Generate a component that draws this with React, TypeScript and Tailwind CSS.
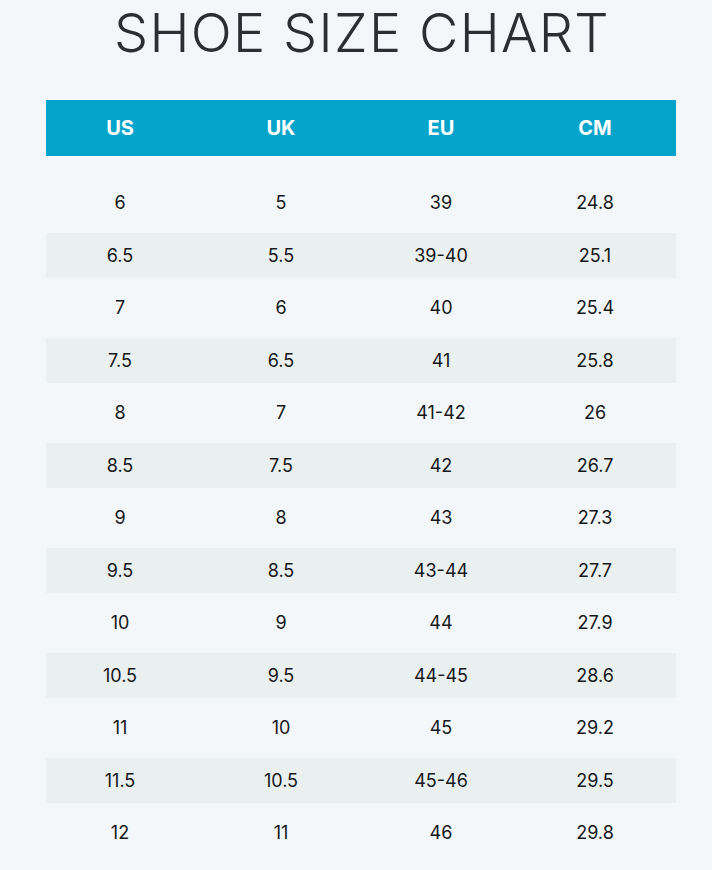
import React from "react";

const rows = [
  ["6", "5", "39", "24.8"],
  ["6.5", "5.5", "39-40", "25.1"],
  ["7", "6", "40", "25.4"],
  ["7.5", "6.5", "41", "25.8"],
  ["8", "7", "41-42", "26"],
  ["8.5", "7.5", "42", "26.7"],
  ["9", "8", "43", "27.3"],
  ["9.5", "8.5", "43-44", "27.7"],
  ["10", "9", "44", "27.9"],
  ["10.5", "9.5", "44-45", "28.6"],
  ["11", "10", "45", "29.2"],
  ["11.5", "10.5", "45-46", "29.5"],
  ["12", "11", "46", "29.8"],
];

const cols = "grid grid-cols-[148px_174px_146px_162px]";

const App = () => {
  return (
    <div className="min-h-[870px] w-full bg-[#f3f7f9] font-['Inter',sans-serif]">
      <div className="flex h-[66px] items-center justify-center pl-[12px]">
        <h1 className="text-[54px] font-light leading-none tracking-[0.025em] text-[#2b2e33]">
          SHOE SIZE CHART
        </h1>
      </div>

      <div className="mx-[46px] mt-[34px] w-[630px]">
        <div className={`${cols} h-[56px] items-center bg-[#05a5cb] text-[20px] font-bold text-white`}>
          <div className="text-center">US</div>
          <div className="text-center">UK</div>
          <div className="text-center">EU</div>
          <div className="text-center">CM</div>
        </div>

        <div className="flex flex-col gap-[7.5px] pt-[24px]">
          {rows.map((row, i) => (
            <div
              key={row[0]}
              className={`${cols} h-[45px] items-center text-[18px] text-[#161719] ${
                i % 2 === 1 ? "bg-[#eaeff0]" : ""
              }`}
            >
              {row.map((cell, j) => (
                <div key={j} className="text-center">
                  {cell}
                </div>
              ))}
            </div>
          ))}
        </div>
      </div>
    </div>
  );
};

export default App;
